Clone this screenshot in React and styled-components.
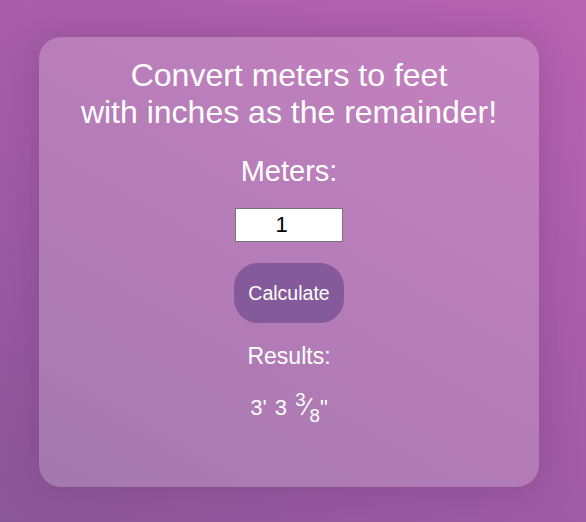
import React, { useState } from 'react';
import styled, { createGlobalStyle } from 'styled-components';

const GlobalStyle = createGlobalStyle`
  html, body {
    margin: 0;
    padding: 0;
  }
  body {
    font-family: 'Liberation Sans', Arial, sans-serif;
    background: linear-gradient(30deg, #8a5797 0%, #a25ca6 45%, #b964b1 100%);
    min-height: 100vh;
  }
`;

const Page = styled.div`
  width: 586px;
  height: 522px;
  box-sizing: border-box;
  padding: 37px 47px 0 39px;
  display: flex;
  justify-content: center;
  align-items: flex-start;
`;

const Card = styled.div`
  width: 500px;
  height: 450px;
  box-sizing: border-box;
  padding-top: 20px;
  border-radius: 22px;
  background: rgba(255, 255, 255, 0.2);
  box-shadow: 0 0 40px rgba(80, 30, 90, 0.25);
  display: flex;
  flex-direction: column;
  align-items: center;
  color: #fff;
  text-align: center;
`;

const Title = styled.h1`
  margin: 0;
  font-size: 32px;
  font-weight: 300;
  line-height: 37px;
`;

const Label = styled.label`
  margin-top: 24px;
  font-size: 29px;
  line-height: 33px;
`;

const Input = styled.input`
  margin-top: 20px;
  width: 108px;
  height: 34px;
  box-sizing: border-box;
  border: 1px solid #767676;
  background: #fff;
  font-family: 'Liberation Sans', Arial, sans-serif;
  font-size: 22px;
  text-align: center;
  padding: 0;
  outline: none;
`;

const Button = styled.button`
  margin-top: 21px;
  width: 110px;
  height: 60px;
  border: none;
  border-radius: 24px;
  background: #845a9b;
  color: #fff;
  font-family: 'Liberation Sans', Arial, sans-serif;
  font-size: 19.5px;
  cursor: pointer;
`;

const Heading = styled.div`
  margin-top: 20px;
  font-size: 23px;
  line-height: 27px;
`;

const Result = styled.div`
  margin-top: 25px;
  font-size: 22px;
  line-height: 26px;
  word-spacing: 2px;
`;

const Sup = styled.sup`
  font-size: 0.85em;
  line-height: 0;
  vertical-align: 0.5em;
`;

const Slash = styled.span`
  font-size: 1.1em;
  line-height: 0;
`;

const Sub = styled.sub`
  font-size: 0.85em;
  line-height: 0;
  vertical-align: -0.35em;
`;

const toFeet = (m) => {
  const totalIn = m * 39.3701;
  let feet = Math.floor(totalIn / 12);
  let inches = totalIn - feet * 12;
  let whole = Math.floor(inches);
  let eighths = Math.round((inches - whole) * 8);
  if (eighths === 8) {
    whole += 1;
    eighths = 0;
  }
  return { feet, whole, eighths };
};

const App = () => {
  const [meters, setMeters] = useState('1');
  const [result, setResult] = useState(toFeet(1));
  const frac = result.eighths
    ? result.eighths % 4 === 0
      ? [result.eighths / 4, 2]
      : result.eighths % 2 === 0
      ? [result.eighths / 2, 4]
      : [result.eighths, 8]
    : null;

  return (
    <>
      <GlobalStyle />
      <Page>
        <Card>
          <Title>
            Convert meters to feet
            <br />
            with inches as the remainder!
          </Title>
          <Label htmlFor="meters">Meters:</Label>
          <Input
            id="meters"
            type="number"
            value={meters}
            onChange={(e) => setMeters(e.target.value)}
          />
          <Button onClick={() => setResult(toFeet(parseFloat(meters) || 0))}>Calculate</Button>
          <Heading>Results:</Heading>
          <Result>
            {result.feet}' {result.whole}
            {frac && (
              <>
                {' '}
                <Sup>{frac[0]}</Sup>
                <Slash>&frasl;</Slash>
                <Sub>{frac[1]}</Sub>
              </>
            )}
            "
          </Result>
        </Card>
      </Page>
    </>
  );
};

export default App;
